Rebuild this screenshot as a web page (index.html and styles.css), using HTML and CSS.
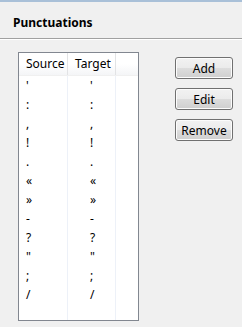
FILE: index.html
```html
<!DOCTYPE html>
<html lang="en">
<head>
  <meta charset="UTF-8" />
  <title>Punctuations</title>
  <link rel="stylesheet" href="styles.css">
</head>
<body>
  <div class="topline"></div>
  <div class="header">
    <h2>Punctuations</h2>
  </div>
  <div class="divider"></div>

  <div class="content">
    <div class="listbox">
      <div class="list-head">
        <div class="col src">Source</div>
        <div class="col tgt">Target</div>
        <div class="col rest"></div>
      </div>
      <div class="list-body">
        <div class="row"><span class="src">'</span><span class="tgt">'</span><span class="rest"></span></div>
        <div class="row"><span class="src">:</span><span class="tgt">:</span><span class="rest"></span></div>
        <div class="row"><span class="src">,</span><span class="tgt">,</span><span class="rest"></span></div>
        <div class="row"><span class="src">!</span><span class="tgt">!</span><span class="rest"></span></div>
        <div class="row"><span class="src">.</span><span class="tgt">.</span><span class="rest"></span></div>
        <div class="row"><span class="src">«</span><span class="tgt">«</span><span class="rest"></span></div>
        <div class="row"><span class="src">»</span><span class="tgt">»</span><span class="rest"></span></div>
        <div class="row"><span class="src">-</span><span class="tgt">-</span><span class="rest"></span></div>
        <div class="row"><span class="src">?</span><span class="tgt">?</span><span class="rest"></span></div>
        <div class="row"><span class="src">"</span><span class="tgt">"</span><span class="rest"></span></div>
        <div class="row"><span class="src">;</span><span class="tgt">;</span><span class="rest"></span></div>
        <div class="row"><span class="src">/</span><span class="tgt">/</span><span class="rest"></span></div>
        <div class="row filler"><span class="src"></span><span class="tgt"></span><span class="rest"></span></div>
      </div>
    </div>

    <div class="buttons">
      <button>Add</button>
      <button>Edit</button>
      <button>Remove</button>
    </div>
  </div>
</body>
</html>
```

FILE: styles.css
```css
body {
  font-family: "Noto Sans", "Open Sans", Arial, sans-serif;
  font-size: 12px;
  color: #000;
  background: #f0f0f0;
  margin: 0;
  padding: 0;
  height: 327px;
  overflow: hidden;
}
.topline {
  height: 2px;
  background: #a9c0d8;
}
.header {
  height: 36px;
  padding: 5px 0 0 13px;
  box-sizing: border-box;
  display: flex;
  align-items: center;
}
h2 {
  margin: 0;
  font-size: 12px;
  font-weight: bold;
}
.divider {
  border-top: 1px solid #a0a0a0;
  border-bottom: 1px solid #ffffff;
}
.content {
  display: flex;
  padding: 12px 0 0 18px;
  gap: 36px;
}
.listbox {
  width: 119px;
  height: 267px;
  border: 1px solid #828790;
  background: #fff;
  display: flex;
  flex-direction: column;
  overflow: hidden;
}
.list-head {
  display: flex;
  height: 22px;
  background: linear-gradient(#ffffff, #ffffff 50%, #f4f5f7);
  border-bottom: 1px solid #f0f0f0;
}
.list-head .col {
  display: flex;
  align-items: center;
  border-right: 1px solid #e2e3e5;
  line-height: 1;
}
.src {
  width: 49px;
  padding-left: 7px;
  box-sizing: border-box;
}
.tgt {
  width: 48px;
  padding-left: 7px;
  box-sizing: border-box;
}
.list-body .tgt {
  padding-left: 22px;
}
.rest {
  flex: 1;
}
.list-head .rest {
  border-right: none;
}
.list-body {
  flex: 1;
  display: flex;
  flex-direction: column;
}
.row {
  display: flex;
  height: 19px;
  line-height: 19px;
  color: #000;
}
.row span {
  border-right: 1px solid #edf1f8;
  color: #000;
}
.row span.rest {
  border-right: none;
}
.row.filler {
  flex: 1;
}
.buttons {
  display: flex;
  flex-direction: column;
  gap: 9px;
  padding-top: 5px;
}
button {
  width: 58px;
  height: 22px;
  padding: 0;
  font-family: inherit;
  font-size: 12px;
  color: #000;
  border: 1px solid #707070;
  border-radius: 3px;
  background: linear-gradient(#f2f2f2, #ebebeb 50%, #dddddd 50%, #cfcfcf);
  box-shadow: inset 0 0 0 1px #fcfcfc;
}
```
